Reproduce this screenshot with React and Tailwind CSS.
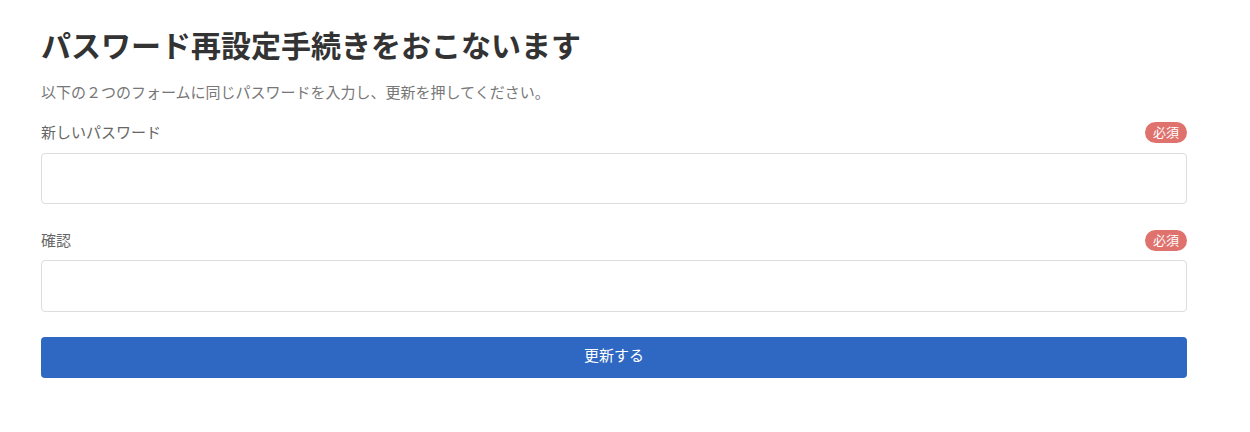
export default function App() {
  const font = { fontFamily: '"Noto Sans CJK JP", "Noto Sans", sans-serif' };
  return (
    <div className="w-[1250px] h-[432px] bg-white" style={font}>
      <div className="ml-[41px] w-[1146px] flex flex-col">
        <h1 className="mt-[22px] h-[45px] leading-[45px] text-[30px] font-bold text-[#333333]">
          パスワード再設定手続きをおこないます
        </h1>
        <p className="mt-[14px] h-[22px] leading-[22px] text-[15px] text-[#777777]">
          以下の２つのフォームに同じパスワードを入力し、更新を押してください。
        </p>
        <div className="mt-[19px] flex items-center justify-between h-[21px]">
          <span className="text-[15px] leading-[21px] text-[#666666] -translate-y-[1px]">新しいパスワード</span>
          <span className="h-[21px] px-[8px] rounded-full bg-[#e0726d] text-white text-[13px] leading-[20px]">必須</span>
        </div>
        <input type="password" className="mt-[10px] h-[51px] w-full border border-[#dddddd] rounded-[4px] px-3 outline-none" />
        <div className="mt-[26px] flex items-center justify-between h-[21px]">
          <span className="text-[15px] leading-[21px] text-[#666666] -translate-y-[1px]">確認</span>
          <span className="h-[21px] px-[8px] rounded-full bg-[#e0726d] text-white text-[13px] leading-[20px]">必須</span>
        </div>
        <input type="password" className="mt-[9px] h-[52px] w-full border border-[#dddddd] rounded-[4px] px-3 outline-none" />
        <button className="mt-[25px] h-[41px] w-full rounded-[4px] bg-[#2f68c2] text-white text-[15px] flex items-center justify-center">
          <span className="-translate-y-[2px]">更新する</span>
        </button>
      </div>
    </div>
  );
}
